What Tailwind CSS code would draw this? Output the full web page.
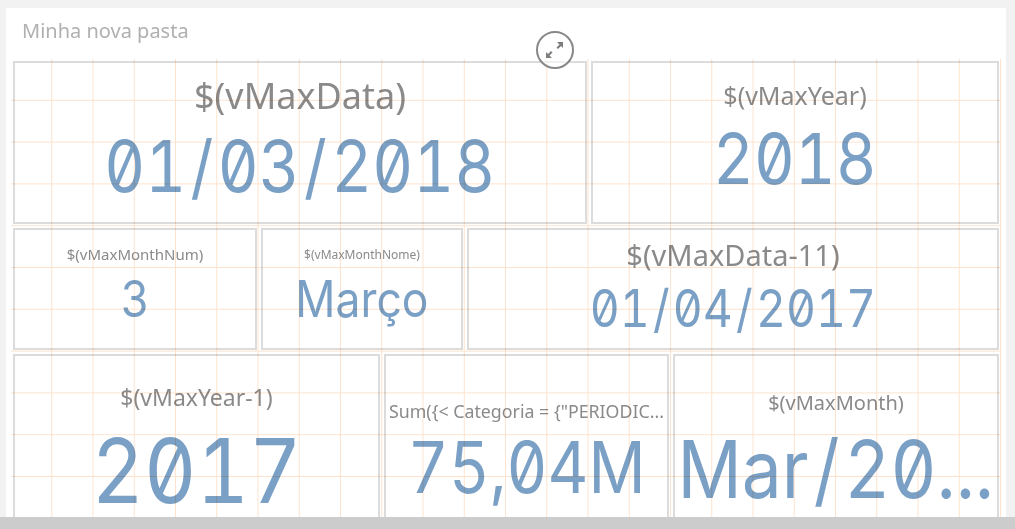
<!DOCTYPE html>
<html>
<head>
<meta charset="utf-8">
<script src="https://cdn.jsdelivr.net/npm/@tailwindcss/browser@4"></script>
</head>
<body class="w-[1015px] h-[529px] overflow-hidden bg-[#f2f2f2] font-['Noto_Sans',sans-serif]">
<div class="relative w-[1015px] h-[529px] flex flex-col overflow-hidden">
  <main class="h-[509px] mt-2 ml-[6px] w-[1000px] bg-white overflow-hidden flex flex-col pl-[7px] shrink-0">
    <h1 class="h-[53px] shrink-0 pl-[9px] pt-[9px] text-[20px] leading-[28px] text-[#b0b0b0]">Minha nova pasta</h1>
    <div class="flex gap-1 h-[163px] shrink-0 w-[986px]">
      <section class="w-[574px] shrink-0 border-2 border-[#dcdcdc] flex flex-col items-center pt-[8px]">
        <h2 class="text-[36px] leading-[50px] text-[#8a8a8a]">$(vMaxData)</h2>
        <p class="text-[71px] leading-[90px] font-['Inter',sans-serif] slashed-zero tabular-nums scale-x-[.89] text-[#7ba0c6] whitespace-nowrap">01<span class="mx-[.07em]">/</span>03<span class="mx-[.07em]">/</span>2018</p>
      </section>
      <section class="flex-1 min-w-0 border-2 border-[#dcdcdc] flex flex-col items-center pt-[14px]">
        <h2 class="text-[25px] leading-[36px] text-[#8a8a8a]">$(vMaxYear)</h2>
        <p class="text-[70px] leading-[91px] font-['Inter',sans-serif] slashed-zero tabular-nums scale-x-[.9] text-[#7ba0c6] whitespace-nowrap">2018</p>
      </section>
    </div>
    <div class="flex gap-1 h-[122px] shrink-0 w-[986px] mt-1">
      <section class="w-[244px] shrink-0 border-2 border-[#dcdcdc] flex flex-col items-center pt-[13px]">
        <h2 class="text-[15px] leading-[22px] text-[#8a8a8a]">$(vMaxMonthNum)</h2>
        <p class="text-[50px] leading-[68px] font-['Inter',sans-serif] slashed-zero tabular-nums scale-x-[.89] text-[#7ba0c6] whitespace-nowrap">3</p>
      </section>
      <section class="w-[202px] shrink-0 border-2 border-[#dcdcdc] flex flex-col items-center pt-[16px]">
        <h2 class="text-[12px] leading-[18px] text-[#8a8a8a]">$(vMaxMonthNome)</h2>
        <p class="text-[50px] leading-[70px] font-['Inter',sans-serif] slashed-zero tabular-nums scale-x-[.89] text-[#7ba0c6] whitespace-nowrap">Março</p>
      </section>
      <section class="flex-1 min-w-0 border-2 border-[#dcdcdc] flex flex-col items-center pt-[6px]">
        <h2 class="text-[29px] leading-[38px] text-[#8a8a8a]">$(vMaxData-11)</h2>
        <p class="text-[52px] leading-[70px] font-['Inter',sans-serif] slashed-zero tabular-nums scale-x-[.89] text-[#7ba0c6] whitespace-nowrap">01<span class="mx-[.07em]">/</span>04<span class="mx-[.07em]">/</span>2017</p>
      </section>
    </div>
    <div class="flex gap-1 h-[175px] shrink-0 w-[986px] mt-1">
      <section class="w-[367px] shrink-0 border-2 border-[#dcdcdc] flex flex-col items-center pt-[24px]">
        <h2 class="text-[23px] leading-[34px] text-[#8a8a8a]">$(vMaxYear-1)</h2>
        <p class="text-[89px] leading-[113px] font-['Inter',sans-serif] slashed-zero tabular-nums scale-x-[.91] text-[#7ba0c6] whitespace-nowrap">2017</p>
      </section>
      <section class="w-[285px] shrink-0 border-2 border-[#dcdcdc] flex flex-col items-center pt-[41px]">
        <h2 class="text-[17.8px] leading-[28px] text-[#8a8a8a] whitespace-nowrap">Sum({&lt; Categoria = {"PERIODIC...</h2>
        <p class="text-[71px] leading-[84px] font-['Inter',sans-serif] slashed-zero tabular-nums scale-x-[.89] text-[#7ba0c6] whitespace-nowrap">75,04M</p>
      </section>
      <section class="flex-1 min-w-0 border-2 border-[#dcdcdc] flex flex-col items-center pt-[32px]">
        <h2 class="text-[20px] leading-[30px] text-[#8a8a8a]">$(vMaxMonth)</h2>
        <p class="text-[80px] leading-[102px] font-['Inter',sans-serif] slashed-zero tabular-nums scale-x-[.89] text-[#7ba0c6] whitespace-nowrap">Mar<span class="mx-[.07em]">/</span>20...</p>
      </section>
    </div>
  </main>
  <div class="flex-1 bg-[#cccccc]"></div>
  <div class="absolute left-[11px] top-[59px] w-[990px] h-[458px] pointer-events-none mix-blend-multiply bg-[linear-gradient(to_right,transparent_40.25px,#fde3cd_40.25px),linear-gradient(to_bottom,transparent_40.8px,#fde3cd_40.8px)] bg-[size:41.25px_41.8px]"></div>
  <div class="absolute left-[536px] top-[31px] w-[38px] h-[38px] rounded-full border-2 border-[#888888] bg-white/60 flex items-center justify-center">
    <svg width="18" height="18" viewBox="0 0 18 18" fill="#7d7d7d"><path d="M11 1h6v6l-2-2-3 3-1.5-1.5 3-3zM6 17H0v-6l2 2 3-3 1.5 1.5-3 3z"/></svg>
  </div>
</div>
</body>
</html>
